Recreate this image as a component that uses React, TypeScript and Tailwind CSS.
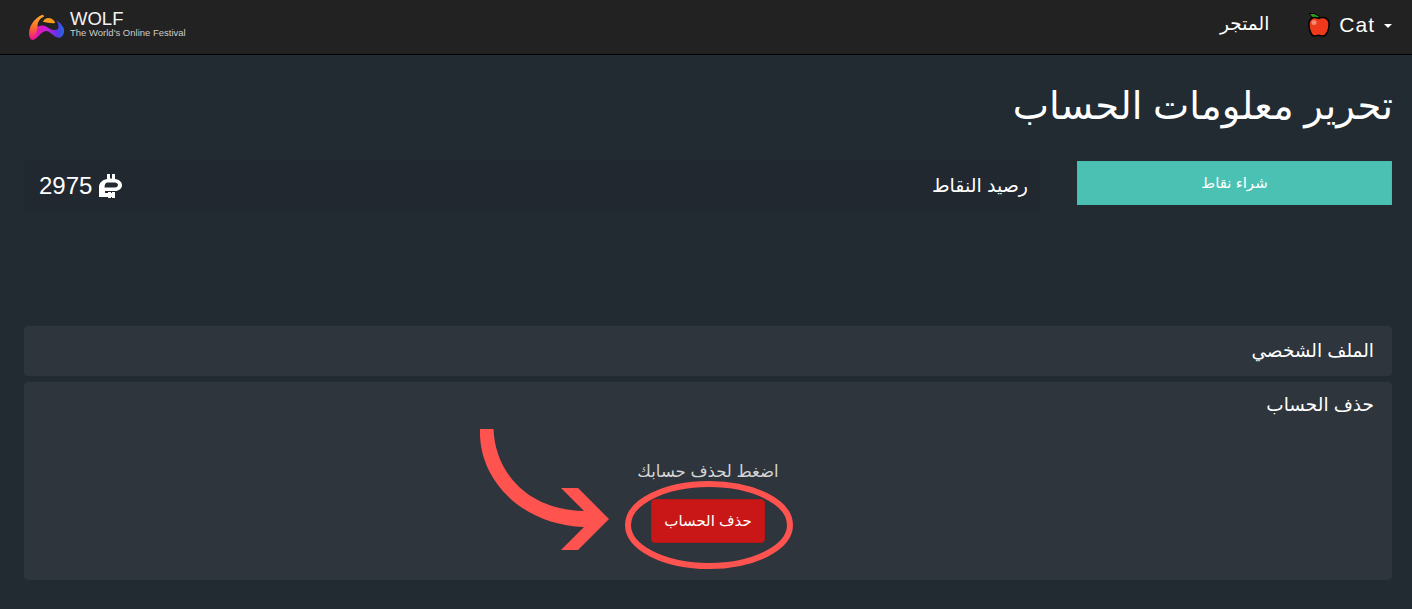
const font = { fontFamily: '"Liberation Sans", Arial, "DejaVu Sans", sans-serif' }

function WolfLogo() {
  return (
    <svg width="36" height="27" viewBox="0 0 36 27" className="shrink-0">
      <defs>
        <linearGradient id="wolf" x1="0" y1="0" x2="1" y2="0">
          <stop offset="0" stopColor="#f0138f" />
          <stop offset="0.5" stopColor="#c81ed8" />
          <stop offset="0.8" stopColor="#5a35e8" />
          <stop offset="1" stopColor="#1f6fe0" />
        </linearGradient>
        <linearGradient id="wolfTop" x1="0" y1="0" x2="0" y2="1">
          <stop offset="0" stopColor="#fbb81c" />
          <stop offset="0.55" stopColor="#f9682a" />
          <stop offset="1" stopColor="#f0138f" />
        </linearGradient>
      </defs>
      <path d="M0.300 18C1 10 7 3 14 0.700L15 2.500C11 4 8 8 8.500 13C11 11 15 11 18 13C22 16 26 17 29 15C30 12 29 8 27 6C32 9 36 14 35 18.500C34 23 31 24.500 28 23.500C24 22 21 17 17 17C12 17 8 26 3.500 26C1 26 0 22 0.300 18Z" fill="url(#wolf)" />
      <path d="M0.300 18C1 10 7 3 14 0.700L15 2.500C11 4 8 8 8.500 13C8 16 7 20 6 25C1 26 0 22 0.300 18Z" fill="url(#wolfTop)" />
      <path d="M14 8C15 4 20 3 23 5C25 6 26 8 26 9C22 10 18 8 14 8Z" fill="#fb9a1c" />
    </svg>
  )
}

function AppleIcon() {
  return (
    <svg width="22" height="24" viewBox="0 0 22 24" className="shrink-0">
      <path d="M1 0.500H6L11 3V6H6Z" fill="#2f9e1f" stroke="#000" strokeWidth="1" />
      <path d="M10.500 5.500C14 3.500 20 4 21 10C21.500 15 19 23 15 23C13 23 12 22.300 10.500 22.300C9 22.300 8 23 6 23C3 23 0.500 15 1 10C2 4 7 3.500 10.500 5.500Z" fill="#ee3a1a" stroke="#000" strokeWidth="1.500" />
      <circle cx="6" cy="9.500" r="2.500" fill="#f58a70" />
    </svg>
  )
}

function PointsIcon() {
  return (
    <svg width="24" height="24" viewBox="0 0 24 24" className="shrink-0">
      <path d="M8 0H11V4.500H13V0H16V5C20 5.500 23 8 23 11C23 14.500 20 17 16 17H6V19H9V18H12V19H13V18H16V24H13V23H12V24H9V23H0V13C0 9 3 6 8 5Z" fill="#fff" />
      <path d="M8 8.500H15.500C18 8.500 19 10 19 11C19 12 18 13.500 15.500 13.500H5.500C5.500 11 6 9.500 8 8.500Z" fill="#222a32" />
    </svg>
  )
}

function Annotation() {
  return (
    <svg width="135" height="124" viewBox="0 0 135 124" className="absolute left-[477px] top-[427px]">
      <path d="M3 2H16.500C18 43 48 83 107 84L84 61H101L132 92L101 123H84L107 100C45 98 1 53 3 2Z" fill="#ff5350" />
    </svg>
  )
}

function DeleteRing() {
  return (
    <svg width="170" height="90" viewBox="0 0 170 90" className="absolute left-[625px] top-[481px]">
      <ellipse cx="84" cy="44" rx="81" ry="41" fill="none" stroke="#ff5350" strokeWidth="6" />
    </svg>
  )
}

export default function App() {
  return (
    <div className="relative h-[609px] overflow-hidden bg-[#222a32] text-white" style={font}>
      <nav className="flex h-[55px] items-center justify-between border-b border-black bg-[#222222] pl-[29px] pr-[20px]">
        <div className="flex items-center gap-[5px]">
          <WolfLogo />
          <div className="-mt-[6px]">
            <div className="text-[18.500px] leading-[18px] text-[#f2f2f2]">WOLF</div>
            <div className="text-[9.500px] leading-[10px] text-[#cccccc]">The World's Online Festival</div>
          </div>
        </div>
        <div className="flex items-center">
          <a className="-mt-[7px] text-[18.500px] text-white" dir="rtl">المتجر</a>
          <div className="-mt-[4px] ml-[39px] flex items-center">
            <AppleIcon />
            <span className="ml-[9px] text-[21px] tracking-[1px]">Cat</span>
            <span className="ml-[9px] mt-[2px] border-x-[4px] border-t-[4px] border-x-transparent border-t-white" />
          </div>
        </div>
      </nav>

      <main dir="rtl" className="pl-[24px] pr-[20px]">
        <h1 className="-mr-[1px] mt-[25px] text-[38.500px] font-normal leading-[52px]">تحرير معلومات الحساب</h1>

        <div className="mt-[29px] flex items-start">
          <button className="h-[44px] w-[315px] border border-[#46bdb0] bg-[#4ac1b3] text-[15px] font-normal">شراء نقاط</button>
          <div className="mr-[37px] flex h-[50px] flex-1 items-center justify-between bg-[#212830] pl-[15px] pr-[12px]">
            <span className="text-[19px]">رصيد النقاط</span>
            <span dir="ltr" className="flex items-center gap-[7px] text-[24px]">
              2975
              <PointsIcon />
            </span>
          </div>
        </div>

        <section className="mt-[115px] flex h-[50px] items-center rounded-[4px] bg-[#2e353d] px-[18px]">
          <h2 className="text-[18.500px] font-normal">الملف الشخصي</h2>
        </section>

        <section className="mt-[6px] h-[198px] rounded-[4px] bg-[#2e353d] px-[18px] pt-[9px]">
          <h2 className="text-[18.500px] font-normal leading-[28px]">حذف الحساب</h2>
          <div className="mr-[166px] mt-[41px] flex w-[1000px] flex-col items-center">
            <p className="text-[16.500px] leading-[22px] text-[#d6d6d6]">اضغط لحذف حسابك</p>
            <button className="mt-[17px] h-[44px] w-[114px] rounded-[4px] border border-[#b51717] bg-[#c91717] text-[15px] font-normal">حذف الحساب</button>
          </div>
        </section>
      </main>

      <Annotation />
      <DeleteRing />
    </div>
  )
}
